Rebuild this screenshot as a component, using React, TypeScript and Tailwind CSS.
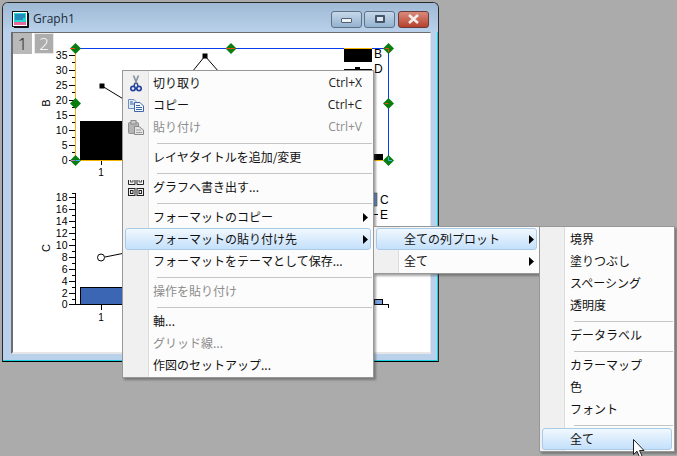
import React from "react";

type Item =
  | { sep: true }
  | { label: string; shortcut?: string; disabled?: boolean; active?: boolean; arrow?: boolean; icon?: React.ReactNode };

const Scissors = () => (
  <svg width="12" height="17" viewBox="0 0 12 17">
    <path d="M3.5 0.5 L7 9 M8.5 0.5 L5 9" stroke="#8a93a0" strokeWidth="1.7" fill="none" />
    <path d="M5 8 L4 11 M7 8 L8 11" stroke="#2f4a90" strokeWidth="1.5" fill="none" />
    <circle cx="3" cy="13.5" r="2.2" fill="none" stroke="#23409e" strokeWidth="1.7" />
    <circle cx="9" cy="13.5" r="2.2" fill="none" stroke="#23409e" strokeWidth="1.7" />
  </svg>
);

const CopyIcon = () => (
  <svg width="16" height="13" viewBox="0 0 16 13">
    <path d="M.5.5H6L8 2.5V9.5H.5Z" fill="#dfe8f5" stroke="#6f8fbf" />
    <path d="M6.5 3.5H12L15.5 7V12.5H6.5Z" fill="#f4f8fd" stroke="#3f66a8" />
    <path d="M8 6.5H12M8 8.5H14M8 10.5H14M2 3H5M2 5H6" stroke="#3f66a8" strokeWidth="1" />
  </svg>
);

const PasteIcon = () => (
  <svg width="16" height="15" viewBox="0 0 16 15">
    <rect x=".5" y="2.5" width="10" height="11" rx="1" fill="#b4b4b4" stroke="#8f8f8f" />
    <rect x="3" y=".5" width="5" height="3.5" fill="#c9c9c9" stroke="#8f8f8f" />
    <path d="M6.5 6.5H11L15.5 10V14.5H6.5Z" fill="#e4e4e4" stroke="#8a8a8a" />
    <path d="M8 10H13M8 12.5H14" stroke="#a0a0a0" />
  </svg>
);

const ExportIcon = () => (
  <svg width="16" height="17" viewBox="0 0 16 17">
    <path d="M.5 1V5.5H7V1M9 1V5.5H15.5V1" fill="none" stroke="#222" />
    <path d="M2.5 1V3H5V1M11 1V3H13.5V1" fill="none" stroke="#555" />
    <rect x=".5" y="9.5" width="6.5" height="7" fill="none" stroke="#222" />
    <rect x="9" y="9.5" width="6.5" height="7" fill="none" stroke="#222" />
    <rect x="2.5" y="11.5" width="2.5" height="3" fill="none" stroke="#222" />
    <rect x="11" y="11.5" width="2.5" height="3" fill="none" stroke="#222" />
  </svg>
);

const Arrow = () => (
  <svg width="5" height="9" viewBox="0 0 5 9" className="shrink-0">
    <path d="M0 0L5 4.5L0 9Z" fill="#000" />
  </svg>
);

function Menu({ items, className, gutter, labelX, arrowPad }: { items: Item[]; className: string; gutter: string; labelX: string; arrowPad: string }) {
  return (
    <div className={`absolute flex flex-col border border-[#979797] py-px shadow-[2px_2px_2px_rgba(60,60,60,0.45)] ${gutter} ${className}`}>
      {items.map((it, i) =>
        "sep" in it ? (
          <div key={i} className={`h-[8px] flex items-center pr-px ${labelX}`}>
            <div className="h-px w-full ml-[4px] mt-[2px] bg-[#c5c5c5]" />
          </div>
        ) : (
          <div
            key={i}
            className={`relative h-[22px] flex items-center text-[12px] ${labelX} ${arrowPad} ${it.disabled ? "text-[#8d8d8d]" : "text-[#111]"}`}
          >
            {it.active && (
              <div className="absolute top-0 bottom-0 left-[2px] right-[2px] rounded-[3px] border border-[#a9cbe9] bg-gradient-to-b from-[#f1f8fe] to-[#c4e0fb]" />
            )}
            {it.icon && <div className="absolute left-0 top-0 bottom-0 w-[26px] flex items-center justify-center">{it.icon}</div>}
            <span className="relative flex-1 whitespace-nowrap">{it.label}</span>
            {it.shortcut && (
              <span className={`relative mr-[6px] font-['Open_Sans'] text-[12px] ${it.disabled ? "text-[#8d8d8d]" : "text-[#222]"}`}>{it.shortcut}</span>
            )}
            {it.arrow && (
              <span className="relative">
                <Arrow />
              </span>
            )}
          </div>
        )
      )}
    </div>
  );
}

const Diamond = ({ x, y }: { x: number; y: number }) => (
  <path d={`M${x} ${y - 5.5}L${x + 5.5} ${y}L${x} ${y + 5.5}L${x - 5.5} ${y}Z`} fill="#0a7d10" />
);

function Ticks({ x, ys, minors }: { x: number; ys: number[]; minors: number[] }) {
  return (
    <g stroke="#000" strokeWidth="1">
      {ys.map((y) => (
        <line key={y} x1={x - 6} x2={x} y1={y + 0.5} y2={y + 0.5} />
      ))}
      {minors.map((y) => (
        <line key={y} x1={x - 3} x2={x} y1={y + 0.5} y2={y + 0.5} />
      ))}
    </g>
  );
}

function Chart() {
  const upper: [string, number][] = [["35", 55], ["30", 70], ["25", 85], ["20", 100], ["15", 115], ["10", 130], ["5", 145], ["0", 160]];
  const lower: [string, number][] = [["18", 197], ["16", 209], ["14", 221], ["12", 233], ["10", 245], ["8", 257], ["6", 269], ["4", 281], ["2", 293], ["0", 304]];
  const txt = { fontFamily: "'Liberation Sans', sans-serif", fontSize: 10.5, fill: "#000" };
  return (
    <svg width="419" height="321" viewBox="11 32 419 321" className="block">
      {/* upper layer */}
      <rect x="80" y="121" width="43" height="39" fill="#000" />
      <path d="M102 86L125 100M205 56L192 72M205 56L219 72" stroke="#000" fill="none" />
      <rect x="99.5" y="83.5" width="5" height="5" fill="#000" />
      <rect x="202.5" y="53.5" width="5" height="5" fill="#000" />
      <Ticks x={75} ys={upper.map((u) => u[1])} minors={[62, 77, 92, 107, 122, 137, 152]} />
      <line x1="101.5" x2="101.5" y1="160" y2="165" stroke="#000" />
      <line x1="75.5" x2="75.5" y1="48" y2="160" stroke="#f5b400" />
      <line x1="75" x2="383" y1="160.5" y2="160.5" stroke="#f5b400" />
      <line x1="75" x2="389" y1="48.5" y2="48.5" stroke="#0a3cf0" />
      <line x1="388.5" x2="388.5" y1="48" y2="160" stroke="#0a3cf0" />
      <rect x="344" y="48" width="28" height="14" fill="#000" />
      <line x1="344" x2="372" y1="48.5" y2="48.5" stroke="#f5b400" />
      <line x1="344" x2="372" y1="69.5" y2="69.5" stroke="#000" />
      <rect x="355" y="67" width="5" height="5" fill="#000" />
      <rect x="374" y="154" width="9" height="6" fill="#000" />
      <text x="374" y="58" {...txt} fontSize={12}>B</text>
      <text x="374" y="73" {...txt} fontSize={12}>D</text>
      {upper.map(([t, y]) => (
        <text key={t} x="67.5" y={y + 4} textAnchor="end" {...txt}>{t}</text>
      ))}
      <text x="101" y="175.5" textAnchor="middle" {...txt} fontSize={10}>1</text>
      <text transform="translate(50 103) rotate(-90)" textAnchor="middle" {...txt} fontSize={11}>B</text>
      <Diamond x={75.5} y={48.5} />
      <Diamond x={231} y={48.5} />
      <Diamond x={388.5} y={48.5} />
      <Diamond x={75.5} y={103.5} />
      <Diamond x={388.5} y={103.5} />
      <Diamond x={75.5} y={160.5} />
      <Diamond x={388.5} y={160.5} />
      <path d="M70 48.5H75M226 48.5H235M385 48.5H388.5V52M385 103.5H388.5" stroke="#f04a10" fill="none" />
      <path d="M71 160.5H75" stroke="#d868c8" />
      <path d="M75.5 160.5H80M388.5 157V160.5H392" stroke="#30b8e8" fill="none" />

      {/* page tabs */}
      <rect x="12" y="33" width="20" height="21" fill="#b9b9b9" />
      <rect x="34.5" y="33.5" width="19" height="20" fill="#adadad" stroke="#e8e8e8" />
      <text x="22.5" y="49.5" textAnchor="middle" fontFamily="'Open Sans', sans-serif" fontWeight="300" fontSize="17" fill="#111">1</text>
      <text x="44" y="49.5" textAnchor="middle" fontFamily="'Open Sans', sans-serif" fontWeight="300" fontSize="17" fill="#fff">2</text>

      {/* lower layer */}
      <rect x="80.5" y="287.5" width="42" height="17" fill="#3a66b3" stroke="#000" />
      <path d="M105 257L125 253" stroke="#000" />
      <circle cx="101" cy="257.5" r="3.5" fill="#fff" stroke="#000" />
      <line x1="75.5" x2="75.5" y1="193" y2="305" stroke="#000" />
      <line x1="72" x2="389" y1="304.5" y2="304.5" stroke="#000" />
      <Ticks x={75} ys={lower.map((u) => u[1])} minors={[193, 203, 215, 227, 239, 251, 263, 275, 287, 299]} />
      <line x1="101.5" x2="101.5" y1="305" y2="310" stroke="#000" />
      <line x1="388.5" x2="388.5" y1="305" y2="308" stroke="#000" />
      <rect x="374.5" y="299.5" width="8" height="5" fill="#7ba0e0" stroke="#000" />
      <rect x="372" y="193" width="5" height="13" fill="#6b8fc8" stroke="#333" strokeWidth=".5" />
      <line x1="374" x2="378" y1="214.5" y2="214.5" stroke="#000" />
      <text x="380" y="203.5" {...txt} fontSize={12}>C</text>
      <text x="380" y="218.5" {...txt} fontSize={12}>E</text>
      {lower.map(([t, y]) => (
        <text key={t} x="67.5" y={y + 4} textAnchor="end" {...txt}>{t}</text>
      ))}
      <text x="101" y="320.5" textAnchor="middle" {...txt} fontSize={10}>1</text>
      <text transform="translate(50 248) rotate(-90)" textAnchor="middle" {...txt} fontSize={11}>C</text>
    </svg>
  );
}

const Cursor = () => (
  <svg width="12" height="19" viewBox="0 0 12 19" className="absolute left-[633px] top-[439px]">
    <path d="M.5.5V15.5L4 12.2L6.5 18L9 17L6.5 11.5H11Z" fill="#fff" stroke="#222" strokeWidth="1" />
  </svg>
);

const CaptionButton = ({ className, children }: { className: string; children: React.ReactNode }) => (
  <div className={`h-[17px] flex items-center justify-center rounded-[3px] border border-[#5f7284] ${className}`}>{children}</div>
);

export default function App() {
  const main: Item[] = [
    { label: "切り取り", shortcut: "Ctrl+X", icon: <Scissors /> },
    { label: "コピー", shortcut: "Ctrl+C", icon: <CopyIcon /> },
    { label: "貼り付け", shortcut: "Ctrl+V", disabled: true, icon: <PasteIcon /> },
    { sep: true },
    { label: "レイヤタイトルを追加/変更" },
    { sep: true },
    { label: "グラフへ書き出す...", icon: <ExportIcon /> },
    { sep: true },
    { label: "フォーマットのコピー", arrow: true },
    { label: "フォーマットの貼り付け先", arrow: true, active: true },
    { label: "フォーマットをテーマとして保存..." },
    { sep: true },
    { label: "操作を貼り付け", disabled: true },
    { sep: true },
    { label: "軸..." },
    { label: "グリッド線...", disabled: true },
    { label: "作図のセットアップ..." },
  ];
  const sub: Item[] = [
    { label: "全ての列プロット", arrow: true, active: true },
    { label: "全て", arrow: true },
  ];
  const third: Item[] = [
    { label: "境界" },
    { label: "塗りつぶし" },
    { label: "スペーシング" },
    { label: "透明度" },
    { sep: true },
    { label: "データラベル" },
    { sep: true },
    { label: "カラーマップ" },
    { label: "色" },
    { label: "フォント" },
    { sep: true },
    { label: "全て", active: true },
  ];

  return (
    <div className="relative w-[677px] h-[456px] overflow-hidden bg-[#ababab] font-['Noto_Sans_CJK_JP',sans-serif]">
      {/* window */}
      <div className="absolute left-[2px] top-[2px] w-[437px] h-[360px] flex flex-col rounded-t-[6px] border border-[#2a2a2a] border-b-[#000] bg-[#b9d1ea] shadow-[inset_-1px_-1px_0_#19d0e0]">
        <div className="h-[29px] shrink-0 flex items-center pt-[3px] pl-[9px] pr-[9px] gap-[4px] rounded-t-[5px] bg-gradient-to-b from-[#9fb9d5] to-[#b9d1ea]">
          <svg width="17" height="17" viewBox="0 0 17 17">
            <rect x=".5" y=".5" width="15" height="15" fill="#fff" stroke="#111" />
            <rect x="2" y="2" width="12" height="9" fill="#22d8d0" />
            <path d="M3 4H13M3 6H13M3 8H11" stroke="#2a3aa8" />
            <rect x="2" y="11" width="12" height="3" fill="#e86a9a" />
            <path d="M16.5 2V16.5H2" stroke="#111" fill="none" />
          </svg>
          <span className="flex-1 font-['Open_Sans'] text-[12px] text-[#1b2b3a]">Graph1</span>
          <div className="flex gap-[2px]">
            <CaptionButton className="w-[31px] bg-gradient-to-b from-[#c6d8ea] to-[#93b2d0]">
              <div className="mt-[3px] w-[11px] h-[5px] bg-[#eef3f8] border border-[#4f5f70] rounded-[1px]" />
            </CaptionButton>
            <CaptionButton className="w-[31px] bg-gradient-to-b from-[#c6d8ea] to-[#93b2d0]">
              <div className="w-[10px] h-[8px] border-2 border-[#46566a] bg-[#dce7f2] rounded-[1px]" />
            </CaptionButton>
            <CaptionButton className="w-[31px] ml-[1px] bg-gradient-to-b from-[#d98a7c] to-[#b5402c] border-[#6b3a3a]">
              <svg width="13" height="10" viewBox="0 0 13 10">
                <path d="M2 1L11 9M11 1L2 9" stroke="#f4efee" strokeWidth="2.6" />
              </svg>
            </CaptionButton>
          </div>
        </div>
        <div className="ml-[8px] mr-[7px] h-[322px] shrink-0 border-t border-l-2 border-t-[#6d6d6d] border-l-[#6d6d6d] border-r border-r-[#e6e6e6] border-b-2 border-b-[#e6e6e6] bg-white overflow-hidden">
          <div className="-ml-[2px] -mt-[1px]">
            <Chart />
          </div>
        </div>
      </div>

      <Menu
        items={main}
        className="left-[122px] top-[70px] w-[252px]"
        gutter="bg-[linear-gradient(90deg,#f0f0f0_25px,#dcdcdc_25px,#dcdcdc_26px,#fcfcfc_26px)]"
        labelX="pl-[30px]"
        arrowPad="pr-[5px]"
      />
      <Menu
        items={sub}
        className="left-[373px] top-[226px] w-[167px]"
        gutter="bg-[linear-gradient(90deg,#f0f0f0_24px,#dcdcdc_24px,#dcdcdc_25px,#fcfcfc_25px)]"
        labelX="pl-[30px]"
        arrowPad="pr-[5px]"
      />
      <Menu
        items={third}
        className="left-[539px] top-[226px] w-[136px]"
        gutter="bg-[linear-gradient(90deg,#f0f0f0_24px,#dcdcdc_24px,#dcdcdc_25px,#fcfcfc_25px)]"
        labelX="pl-[30px]"
        arrowPad="pr-[5px]"
      />
      <Cursor />
    </div>
  );
}
